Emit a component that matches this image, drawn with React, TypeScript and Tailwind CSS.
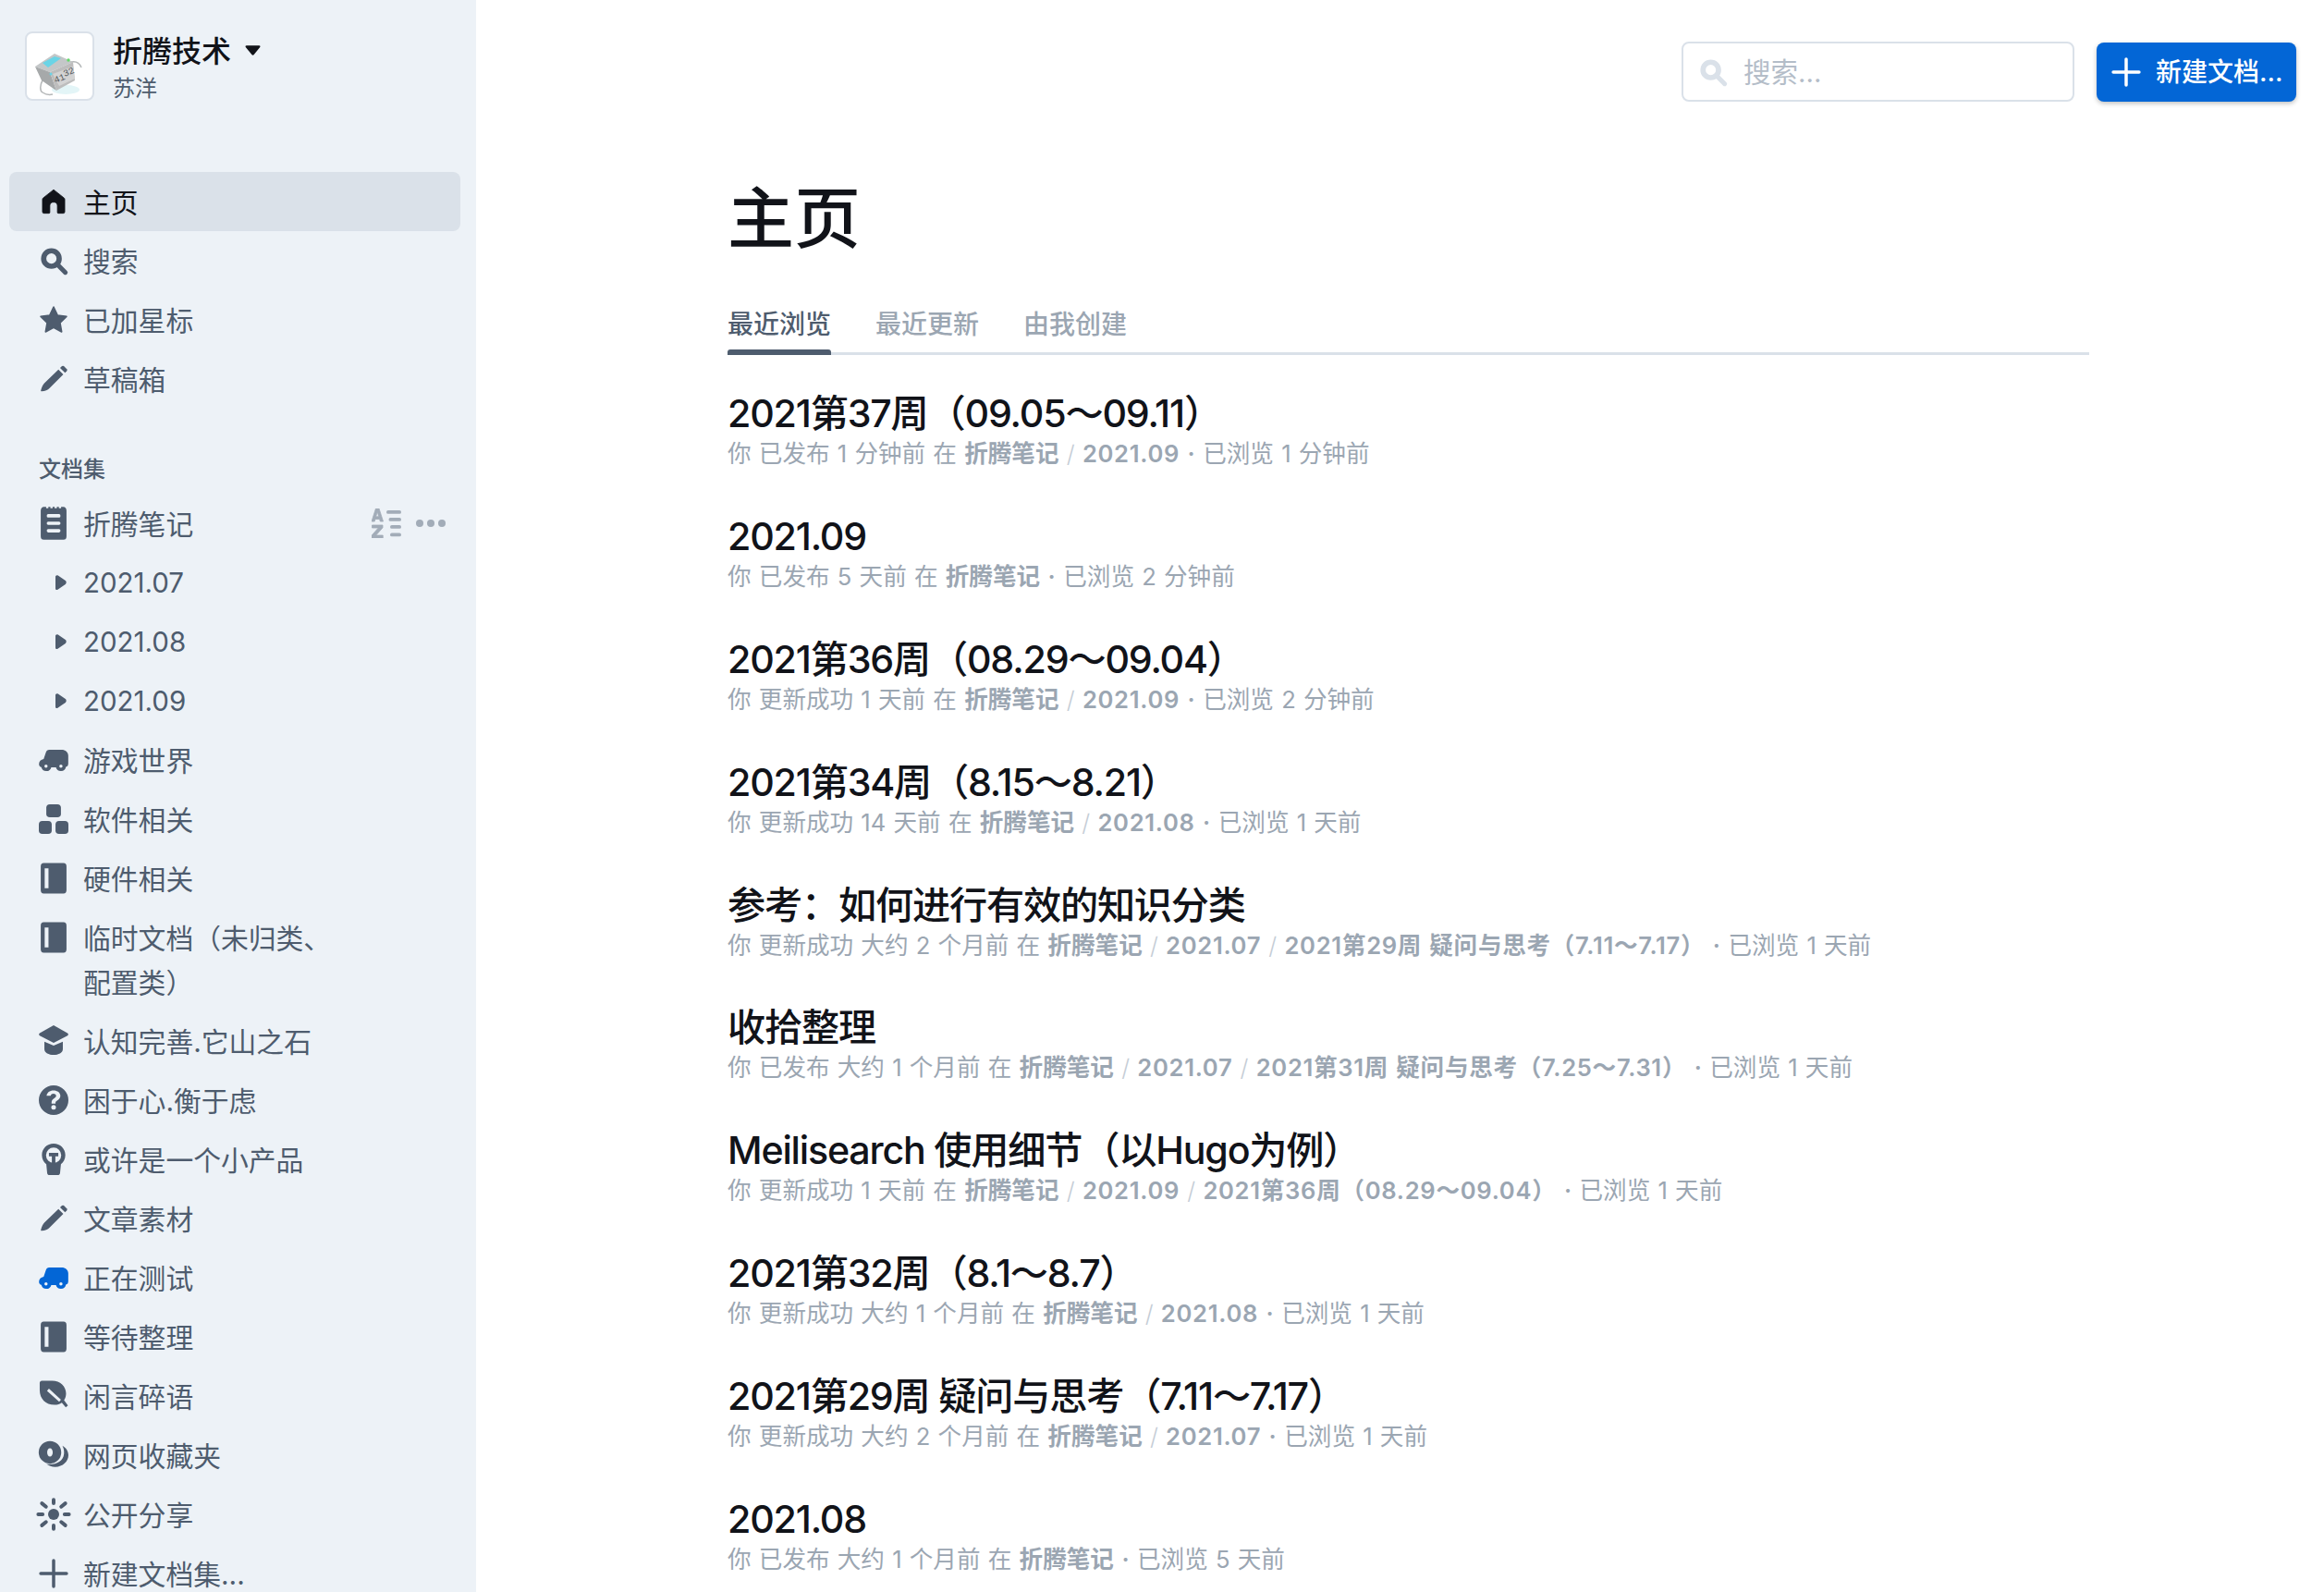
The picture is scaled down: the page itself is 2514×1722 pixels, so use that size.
import type { ReactNode } from "react";

const font = "font-['Inter','Noto_Sans_CJK_SC',sans-serif]";

function Ico({ children, className = "text-[#4e5c6e]", tall }: { children: ReactNode; className?: string; tall?: boolean }) {
  return (
    <svg
      viewBox="0 0 24 24"
      preserveAspectRatio="none"
      fill="currentColor"
      className={`w-[38px] shrink-0 ${tall ? "h-[44px]" : "h-[38px]"} ${className}`}
    >
      {children}
    </svg>
  );
}

const Home = () => (
  <path d="M12 3.900 4.800 9.600a1.200 1.200 0 0 0-.4 .9V19a1 1 0 0 0 1 1h3.400a.6.6 0 0 0 .6-.6V15a2.600 2.600 0 0 1 5.200 0v4.400a.6.6 0 0 0 .6.6h3.400a1 1 0 0 0 1-1v-8.500a1.200 1.200 0 0 0-.4-.9z" stroke="currentColor" strokeWidth=".5" />
);
const Search = () => (
  <>
    <circle cx="10.500" cy="10.500" r="5.300" fill="none" stroke="currentColor" strokeWidth="3.600" />
    <path d="M15 15l5 5" stroke="currentColor" strokeWidth="3.200" strokeLinecap="round" />
  </>
);
const Star = () => (
  <path d="M12 3.200l2.700 5.700 6.100.8-4.400 4.300 1.100 6.200L12 17.200l-5.500 3 1.100-6.200-4.400-4.300 6.100-.8z" stroke="currentColor" strokeWidth="1" strokeLinejoin="round" />
);
const Pencil = () => (
  <>
    <path d="M3.800 20.400c-.4 0-.6-.3-.5-.7.6-2.300 1.400-3.900 2.500-5L15.300 5.500l3.300 3.300-9.300 9.300c-1.300 1.300-3.100 2.100-5.500 2.300z" />
    <path d="M16.400 4.400l1.300-1.200a1 1 0 0 1 1.300 0l2 2a1 1 0 0 1 0 1.300l-1.200 1.300z" />
  </>
);
const Notebook = () => (
  <path
    fillRule="evenodd"
    d="M5.500 2.300h1.400v.9h1.500v-.9h1.400v.9h1.500v-.9h1.400v.9h1.500v-.9h1.400v.9h1.500v-.9h1.400A2.400 2.400 0 0 1 20.800 4.700v14.900a2.100 2.100 0 0 1-2.100 2.100H5.300a2.100 2.100 0 0 1-2.100-2.100V4.700A2.400 2.400 0 0 1 5.500 2.300zM8.300 6.600a1 1 0 0 0 0 2h7.400a1 1 0 0 0 0-2zM8.300 11a1 1 0 0 0 0 2h7.400a1 1 0 0 0 0-2zM8.300 15.400a1 1 0 0 0 0 2h7.400a1 1 0 0 0 0-2z"
  />
);
const Book = () => (
  <path
    fillRule="evenodd"
    d="M5.200 3h13.600a2 2 0 0 1 2 2v14a2 2 0 0 1-2 2H5.200a2 2 0 0 1-2-2V5a2 2 0 0 1 2-2zM5.900 6.200v11.600h2.600V6.200z"
  />
);
const Car = () => (
  <path
    fillRule="evenodd"
    d="M9 5h8.500c2.500 0 4.500 1.600 4.500 4v5.500c0 1.300-.6 2-1.600 2.200a3.500 3.500 0 0 1-6.800 .3h-3.200a3.500 3.500 0 0 1-6.800-.1C2.700 16.800 2 16 2 14.800c0-1.800 1.300-3 3.200-3.400l1.500-4.400C7 5.700 7.900 5 9 5zM6.800 15.100a1.100 1.100 0 1 0 0 2.200 1.100 1.100 0 0 0 0-2.200zM17 15.100a1.100 1.100 0 1 0 0 2.200 1.100 1.100 0 0 0 0-2.200z"
  />
);
const Blocks = () => (
  <>
    <rect x="7" y="1.900" width="10" height="8.800" rx="2.400" />
    <rect x="1.900" y="13.300" width="8.800" height="8.800" rx="2.400" />
    <rect x="13.300" y="13.300" width="8.800" height="8.800" rx="2.400" />
  </>
);
const Cap = () => (
  <>
    <path d="M12 1.300l9.500 5.400c.7.5.7 1.200 0 1.700L12 13.200 2.500 8.400c-.7-.5-.7-1.200 0-1.700z" />
    <path d="M5.700 12.500l6.300 2.700 6.300-2.700v5c0 2.500-3 4-6.300 4s-6.300-1.500-6.300-4z" />
  </>
);
const Question = () => (
  <path
    fillRule="evenodd"
    d="M12 1.900a10.100 10.100 0 1 1 0 20.200 10.100 10.100 0 0 1 0-20.200zm-.1 3.400c-2.600 0-4.400 1.400-4.700 3.700h2.800c.2-.9.900-1.400 1.900-1.400 1.100 0 1.800.6 1.800 1.400 0 .7-.4 1.100-1.300 1.700-1.300.8-1.800 1.600-1.800 2.900v.8h2.700v-.5c0-.8.300-1.200 1.300-1.800 1.300-.8 2-1.800 2-3.100 0-2.300-2-3.700-4.700-3.700zm.1 10a1.600 1.600 0 1 0 0 3.200 1.600 1.600 0 0 0 0-3.200z"
  />
);
const Bulb = () => (
  <>
    <path
      fillRule="evenodd"
      d="M12 1.300c4.500 0 8 3.400 8 7.800 0 2.800-1.300 4.800-3 6.200l-.6 6c-.1.900-.7 1.500-1.600 1.500h-5.600c-.9 0-1.500-.6-1.600-1.500l-.6-6c-1.700-1.400-3-3.400-3-6.200 0-4.400 3.500-7.800 8-7.800zm0 2.700a5.200 5.200 0 1 0 0 10.400 5.200 5.200 0 0 0 0-10.400z"
    />
    <path d="M8.800 7.600h6.400v2.300h-2v5.500h-2.400V9.900h-2z" />
  </>
);
const Leaf = () => (
  <path
    fillRule="evenodd"
    d="M4 1.500h7c5.500 0 9.500 3.800 9.500 8.800 0 1.800-.5 3.300-1.400 4.600l2.700 3.500-1.500 1.400-2.700-3.300c-1.300 1-3 1.500-5 1.500-6 0-10.100-4.100-10.100-10V3c0-.9.600-1.500 1.500-1.500zM7.500 8.500L8.800 7 17 14.600 15.800 16z"
  />
);
const Coin = () => (
  <>
    <path fillRule="evenodd" d="M9.500 2.400a7.700 7.700 0 1 1 0 15.400 7.700 7.700 0 0 1 0-15.400zM9.500 7.200c-1.100 0-1.900 1.300-1.900 2.900s.8 2.900 1.900 2.900 1.900-1.300 1.900-2.900-.8-2.900-1.900-2.900z" />
    <path d="M18 5.500c2.500 1.400 4.100 3.800 4.100 6.500 0 4.200-3.800 8-9 8-2.400 0-4.500-.8-6-2 5.500 1 11.500-1.500 12-7 .2-2-.3-4-1.100-5.500z" />
  </>
);
const Sun = () => (
  <>
    <circle cx="12" cy="12" r="3.800" />
    <g stroke="currentColor" strokeWidth="2.500" strokeLinecap="round">
      <path d="M12 2v2.400M12 19.600V22M1.500 12h3M19.500 12h3M4 4.500l2.800 2.300M17.200 17.200l2.800 2.300M20 4.500l-2.800 2.300M6.800 17.200L4 19.500" />
    </g>
  </>
);
const Plus = () => <path d="M12 3.200v17.600M3.200 12h17.600" stroke="currentColor" strokeWidth="2.200" strokeLinecap="round" />;

function Caret() {
  return (
    <svg viewBox="0 0 12 16" className="w-[12px] h-[16px] text-[#4e5c6e]" fill="currentColor">
      <path d="M0 2c0-1.500 1.500-2.300 2.800-1.400l8 5.500c1.200.9 1.200 2.900 0 3.800l-8 5.500C1.500 16.800 0 16 0 14.500z" />
    </svg>
  );
}

function Logo() {
  return (
    <div className="w-[75px] h-[75px] rounded-[8px] border-2 border-[#dae1e9] bg-white flex items-center justify-center shrink-0">
      <svg viewBox="0 0 71 71" className="w-[71px] h-[71px]">
        <ellipse cx="42" cy="61" rx="15" ry="5" fill="#e3f5f7" />
        <path d="M48 31c5-1 9 1 11 6" fill="none" stroke="#b4b7b8" strokeWidth="1.500" />
        <path d="M17 51c-3 5-3 11 0 13 3 2 7 3 11 2" fill="none" stroke="#b4b7b8" strokeWidth="1.500" />
        <path d="M9 36l21-14 20 9-25 11z" fill="#c4c7c8" />
        <path d="M17 32l13-7 7 2-14 10z" fill="#6ad4e6" />
        <path d="M9 36l16 6 7 20-16-11z" fill="#a6a9aa" />
        <path d="M25 42l25-11 2 20-20 11z" fill="#bdbdbd" />
        <path d="M28 44l22-8 2 13-17 8z" fill="#d3d3d3" />
        <text x="31" y="54" fontSize="10" fontFamily="Liberation Mono" fill="#55595b" transform="rotate(-22 31 54)">
          41
        </text>
        <text x="41" y="47" fontSize="10" fontFamily="Liberation Mono" fill="#55595b" transform="rotate(-22 41 47)">
          32
        </text>
        <circle cx="45" cy="29" r="1.700" fill="#63d86a" />
        <circle cx="26" cy="44" r="1.500" fill="#6ad4e6" />
      </svg>
    </div>
  );
}

function NavItem({
  icon,
  label,
  active,
  iconClass,
  tall,
}: {
  icon: ReactNode;
  label: ReactNode;
  active?: boolean;
  iconClass?: string;
  tall?: boolean;
}) {
  return (
    <div
      className={`flex items-start gap-[13px] ml-[10px] mr-[17px] pl-[29px] py-[8px] rounded-[8px] text-[29.8px] leading-[48px] ${
        active ? "bg-[#dae1e9] text-[#111319]" : "text-[#4e5c6e]"
      }`}
    >
      <div className="h-[48px] flex items-center">
        <Ico tall={tall} className={iconClass ?? (active ? "text-[#111319]" : "text-[#4e5c6e]")}>
          {icon}
        </Ico>
      </div>
      <span className="max-w-[280px] pt-[1px] mb-[-1px]">{label}</span>
    </div>
  );
}

function SubItem({ label }: { label: string }) {
  return (
    <div className="flex items-center ml-[10px] pl-[50px] h-[64px] text-[29.5px] text-[#4e5c6e]">
      <Caret />
      <span className="ml-[18px] pt-[1px]">{label}</span>
    </div>
  );
}

function Sidebar() {
  return (
    <aside className="w-[515px] h-[1722px] shrink-0 bg-[#edf2f7] overflow-hidden">
      <div className="flex pl-[27px] pt-[34px] h-[186px]">
        <Logo />
        <div className="ml-[20px]">
          <div className="flex items-center h-[44px] text-[32px] font-medium text-[#111319]">
            折腾技术
            <svg viewBox="0 0 16 12" className="w-[17px] h-[13px] ml-[15px] mt-[-4px]" fill="#111319">
              <path d="M1.500 1h13c.9 0 1.300 .9.800 1.600L9 10.500c-.5.600-1.400.6-1.900 0L.7 2.600C.2 1.900.6 1 1.500 1z" />
            </svg>
          </div>
          <div className="text-[24px] leading-[30px] mt-[3px] text-[#4e5c6e]">苏洋</div>
        </div>
      </div>

      <NavItem active icon={<Home />} label="主页" />
      <NavItem icon={<Search />} label="搜索" />
      <NavItem icon={<Star />} label="已加星标" />
      <NavItem icon={<Pencil />} label="草稿箱" />

      <div className="pl-[42px] pt-[48px] pb-[8px] text-[24px] leading-[36px] font-medium text-[#4e5c6e]">文档集</div>

      <div className="relative">
        <NavItem tall icon={<Notebook />} label="折腾笔记" />
        <div className="absolute right-[33px] top-[16px] flex items-center gap-[16px] text-[#a2acb8]">
          <svg viewBox="0 0 32 32" className="w-[32px] h-[32px]" fill="currentColor">
            <path d="M0 14 4.500 0h3.500L12.500 14H9.300l-.7-2.500H3.900L3.200 14zM4.700 8.800h3L6.200 3.500zM.5 18h11.500v2.800L4.700 29h7.500v3H0v-2.800L7.300 21H.5z" stroke="currentColor" strokeWidth=".8" />
            <rect x="16" y="2" width="16" height="3.800" rx="1.900" />
            <rect x="18.500" y="10" width="13.500" height="3.800" rx="1.900" />
            <rect x="20" y="18" width="12" height="3.800" rx="1.900" />
            <rect x="20" y="26.500" width="12" height="3.800" rx="1.900" />
          </svg>
          <svg viewBox="0 0 32 8" className="w-[32px] h-[8px]" fill="currentColor">
            <circle cx="4" cy="4" r="4" />
            <circle cx="16" cy="4" r="4" />
            <circle cx="28" cy="4" r="4" />
          </svg>
        </div>
      </div>
      <SubItem label="2021.07" />
      <SubItem label="2021.08" />
      <SubItem label="2021.09" />
      <NavItem icon={<Car />} label="游戏世界" />
      <NavItem icon={<Blocks />} label="软件相关" />
      <NavItem tall icon={<Book />} label="硬件相关" />
      <NavItem tall icon={<Book />} label="临时文档（未归类、配置类）" />
      <NavItem icon={<Cap />} label="认知完善.它山之石" />
      <NavItem icon={<Question />} label="困于心.衡于虑" />
      <NavItem icon={<Bulb />} label="或许是一个小产品" />
      <NavItem icon={<Pencil />} label="文章素材" />
      <NavItem icon={<Car />} iconClass="text-[#0366d6]" label="正在测试" />
      <NavItem tall icon={<Book />} label="等待整理" />
      <NavItem icon={<Leaf />} label="闲言碎语" />
      <NavItem icon={<Coin />} label="网页收藏夹" />
      <NavItem icon={<Sun />} label="公开分享" />
      <NavItem icon={<Plus />} label="新建文档集..." />
    </aside>
  );
}

const docs = [
  { title: "2021第37周（09.05～09.11）", action: "已发布 1 分钟前", path: ["2021.09"], viewed: "1 分钟前" },
  { title: "2021.09", action: "已发布 5 天前", path: [], viewed: "2 分钟前" },
  { title: "2021第36周（08.29～09.04）", action: "更新成功 1 天前", path: ["2021.09"], viewed: "2 分钟前" },
  { title: "2021第34周（8.15～8.21）", action: "更新成功 14 天前", path: ["2021.08"], viewed: "1 天前" },
  { title: "参考：如何进行有效的知识分类", action: "更新成功 大约 2 个月前", path: ["2021.07", "2021第29周 疑问与思考（7.11～7.17）"], viewed: "1 天前" },
  { title: "收拾整理", action: "已发布 大约 1 个月前", path: ["2021.07", "2021第31周 疑问与思考（7.25～7.31）"], viewed: "1 天前" },
  { title: "Meilisearch 使用细节（以Hugo为例）", action: "更新成功 1 天前", path: ["2021.09", "2021第36周（08.29～09.04）"], viewed: "1 天前" },
  { title: "2021第32周（8.1～8.7）", action: "更新成功 大约 1 个月前", path: ["2021.08"], viewed: "1 天前" },
  { title: "2021第29周 疑问与思考（7.11～7.17）", action: "更新成功 大约 2 个月前", path: ["2021.07"], viewed: "1 天前" },
  { title: "2021.08", action: "已发布 大约 1 个月前", path: [], viewed: "5 天前" },
];

function DocRow({ title, action, path, viewed }: (typeof docs)[number]) {
  return (
    <div className="h-[132.9px]">
      <div className="text-[41.2px] leading-[50px] tracking-[-1.2px] font-medium text-[#111319] whitespace-nowrap">{title}</div>
      <div className="text-[25.6px] leading-[38px] text-[#9ba6b2] whitespace-nowrap [word-spacing:1px]">
        你 {action} 在 <span className="font-semibold">折腾笔记</span>
        {path.map((p) => (
          <span key={p}>
            <span className="text-[#c5cdd6] font-light"> / </span>
            <span className="font-semibold tracking-[0.7px]">{p}</span>
          </span>
        ))}
        <span className="font-semibold px-[1px]"> · </span>已浏览 {viewed}
      </div>
    </div>
  );
}

export default function App() {
  return (
    <div className={`flex w-[2514px] h-[1722px] overflow-hidden bg-white ${font}`}>
      <Sidebar />
      <main className="flex-1">
        <div className="flex justify-end gap-[24px] pt-[45px] pr-[30px] h-[110px]">
          <div className="w-[425px] h-[65px] flex items-center rounded-[8px] border-2 border-[#dae1e9] pl-[13px] text-[29.5px] text-[#b4bdc8]">
            <Ico className="text-[#dae1e9]">
              <Search />
            </Ico>
            <span className="ml-[14px] pt-[1px]">搜索...</span>
          </div>
          <div className="w-[216px] h-[64px] mt-[1px] flex items-center rounded-[8px] bg-[#0366d6] text-white text-[28px] font-medium pl-[13px] shadow-[0_2px_5px_rgba(0,0,0,0.25)]">
            <Ico className="text-white">
              <Plus />
            </Ico>
            <span className="ml-[13px]">新建文档...</span>
          </div>
        </div>

        <div className="ml-[272px] w-[1473px]">
          <h1 className="pt-[78px] text-[72px] leading-[96px] font-medium text-[#111319]">主页</h1>
          <div className="flex gap-[48px] mt-[40px] h-[60px] border-b-[3px] border-[#dae1e9] text-[28px] leading-[54px] font-medium text-[#9ba6b2]">
            <div className="relative text-[#4e5c6e]">
              最近浏览
              <div className="absolute left-0 right-0 bottom-[-3px] h-[6px] rounded-t-[3px] bg-[#4e5c6e]" />
            </div>
            <div>最近更新</div>
            <div>由我创建</div>
          </div>
          <div className="pt-[38px]">
            {docs.map((d) => (
              <DocRow key={d.title} {...d} />
            ))}
          </div>
        </div>
      </main>
    </div>
  );
}
